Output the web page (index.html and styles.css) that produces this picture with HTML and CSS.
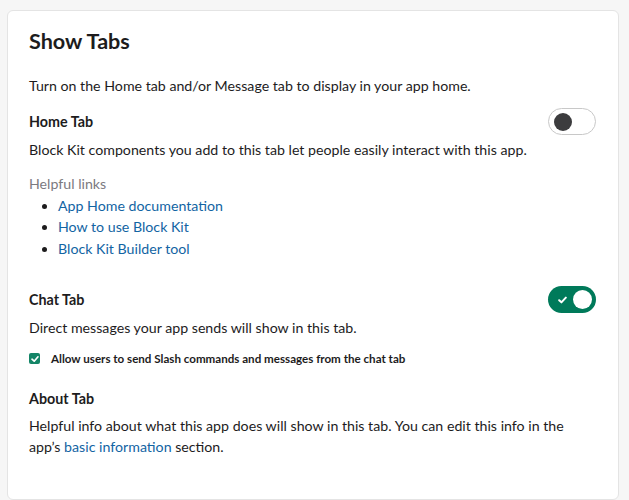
FILE: index.html
```html
<!DOCTYPE html>
<html>
<head>
<meta charset="utf-8">
<link rel="stylesheet" href="styles.css">
</head>
<body>
<div class="card">
  <h1 class="title">Show Tabs</h1>
  <p class="intro">Turn on the Home tab and/or Message tab to display in your app home.</p>

  <div class="row home-row">
    <h2 class="heading">Home Tab</h2>
    <span class="toggle off"><span class="knob"></span></span>
  </div>
  <p class="text">Block Kit components you add to this tab let people easily interact with this app.</p>

  <div class="links">
    <div class="links-label">Helpful links</div>
    <ul class="link-list">
      <li><a href="#">App Home documentation</a></li>
      <li><a href="#">How to use Block Kit</a></li>
      <li><a href="#">Block Kit Builder tool</a></li>
    </ul>
  </div>

  <div class="row chat-row">
    <h2 class="heading">Chat Tab</h2>
    <span class="toggle on">
      <svg class="check" viewBox="0 0 10 8" width="9" height="8"><path d="M1.3 4.3 L3.8 6.6 L8.7 1.4" fill="none" stroke="#fff" stroke-width="2.2" stroke-linecap="round" stroke-linejoin="round"/></svg>
      <span class="knob"></span>
    </span>
  </div>
  <p class="text">Direct messages your app sends will show in this tab.</p>
  <label class="checkrow">
    <span class="checkbox"><svg viewBox="0 0 10 10" width="10" height="10"><path d="M2 5.2 L4.2 7.2 L8 2.8" fill="none" stroke="#fff" stroke-width="1.7" stroke-linecap="round" stroke-linejoin="round"/></svg></span>
    <span class="checklabel">Allow users to send Slash commands and messages from the chat tab</span>
  </label>

  <h2 class="heading about">About Tab</h2>
  <p class="text about-text">Helpful info about what this app does will show in this tab. You can edit this info in the app’s <a href="#">basic information</a> section.</p>
</div>
</body>
</html>
```

FILE: styles.css
```css
html, body {
  margin: 0;
  padding: 0;
  background: #f6f6f6;
}
body {
  font-family: Lato, "Open Sans", sans-serif;
  color: #1d1c1d;
  padding: 10px 10px 10px 7px;
}
.card {
  width: 612px;
  box-sizing: border-box;
  background: #fff;
  border: 1px solid #e4e4e4;
  border-radius: 6px;
  padding: 18px 21px 41px 21px;
}
.title {
  margin: 0;
  font-size: 21.6px;
  font-weight: 700;
  line-height: 22px;
  padding-top: 1px;
}
.intro {
  margin: 23px 0 0;
  font-size: 14.2px;
  line-height: 22px;
}
.row {
  display: flex;
  justify-content: space-between;
  align-items: center;
}
.home-row { margin-top: 11px; }
.heading {
  margin: 0;
  font-size: 14.3px;
  font-weight: 700;
  line-height: 22px;
}
.text {
  margin: 7px 0 0;
  font-size: 14.2px;
  line-height: 21.5px;
}
.row + .text { margin-top: 4px; }
a {
  color: #1264a3;
  text-decoration: none;
}
.toggle {
  width: 48px;
  height: 27px;
  box-sizing: border-box;
  border-radius: 14px;
  display: flex;
  align-items: center;
  margin-right: 1px;
}
.toggle.off {
  border: 1px solid #c8c8c8;
  background: #fff;
  padding-left: 5px;
}
.toggle.off .knob {
  width: 18px;
  height: 18px;
  border-radius: 50%;
  background: #3c3c3e;
}
.toggle.on {
  background: #007a5a;
  justify-content: space-between;
  padding: 0 4px 0 10px;
}
.toggle.on .knob {
  width: 19px;
  height: 19px;
  border-radius: 50%;
  background: #fff;
}
.check { display: block; }
.links {
  margin-top: 12px;
}
.links-label {
  font-size: 14.2px;
  line-height: 22px;
  color: #7c7a7f;
}
.link-list {
  margin: 0;
  padding: 0 0 0 29px;
  font-size: 14.2px;
  line-height: 21.5px;
}
.chat-row { margin-top: 27px; }
.checkrow {
  display: flex;
  align-items: center;
  margin-top: 12px;
}
.checkbox {
  width: 11px;
  height: 11px;
  border-radius: 2px;
  background: #148567;
  display: flex;
  align-items: center;
  justify-content: center;
  margin-right: 11px;
}
.checkbox svg { display: block; }
.checklabel {
  font-size: 11.6px;
  font-weight: 700;
  line-height: 16px;
}
.about { margin-top: 21px; }
.about-text { margin-top: 5px; }
```
